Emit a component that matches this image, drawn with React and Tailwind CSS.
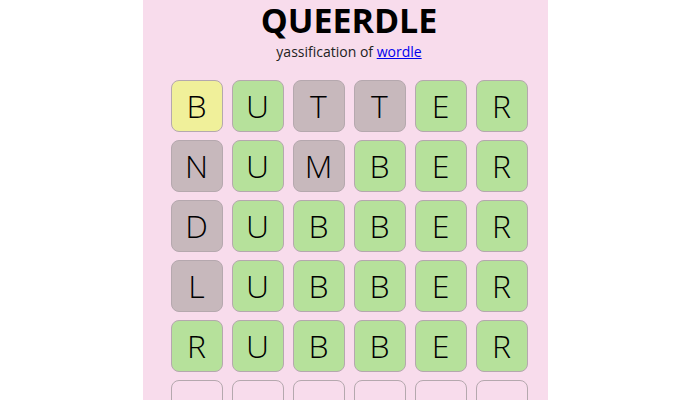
import React from "react";

const GUESSES = [
  ["B", "U", "T", "T", "E", "R"],
  ["N", "U", "M", "B", "E", "R"],
  ["D", "U", "B", "B", "E", "R"],
  ["L", "U", "B", "B", "E", "R"],
  ["R", "U", "B", "B", "E", "R"],
];

const STATES = [
  ["present", "correct", "absent", "absent", "correct", "correct"],
  ["absent", "correct", "absent", "correct", "correct", "correct"],
  ["absent", "correct", "correct", "correct", "correct", "correct"],
  ["absent", "correct", "correct", "correct", "correct", "correct"],
  ["correct", "correct", "correct", "correct", "correct", "correct"],
];

const tileColors = {
  correct: "bg-[#b6e19b]",
  present: "bg-[#f0f09a]",
  absent: "bg-[#c7b8bc]",
  empty: "bg-transparent",
};

const Tile = ({ letter, state }) => (
  <div
    className={`w-[52px] h-[52px] rounded-[8px] border border-[#b5a8ae] flex items-center justify-center text-[32px] font-light leading-none text-black ${tileColors[state]}`}
  >
    {letter}
  </div>
);

const App = () => {
  const rows = [
    ...GUESSES.map((word, r) => word.map((l, c) => ({ letter: l, state: STATES[r][c] }))),
    Array.from({ length: 6 }, () => ({ letter: "", state: "empty" })),
  ];

  return (
    <div
      className="bg-white w-full h-[400px] overflow-hidden"
      style={{ fontFamily: '"Open Sans", "Noto Sans", sans-serif' }}
    >
      <div className="ml-[143px] w-[405px] h-[400px] bg-[#f8dcec] pl-[7px]">
        <div className="flex flex-col items-center">
          <h1 className="text-[34px] font-bold leading-[46px] -mt-[3px] text-black">QUEERDLE</h1>
          <p className="text-[14px] leading-[20px] -mt-[1px] text-[#222]">
            yassification of{" "}
            <a href="#" className="text-[#0000ee] underline">
              wordle
            </a>
          </p>

          {/* Board */}
          <div className="mt-[18px] flex flex-col gap-[8px]">
            {rows.map((row, r) => (
              <div key={r} className="flex gap-[9px]">
                {row.map((t, c) => (
                  <Tile key={c} letter={t.letter} state={t.state} />
                ))}
              </div>
            ))}
          </div>
        </div>
      </div>
    </div>
  );
};

export default App;
